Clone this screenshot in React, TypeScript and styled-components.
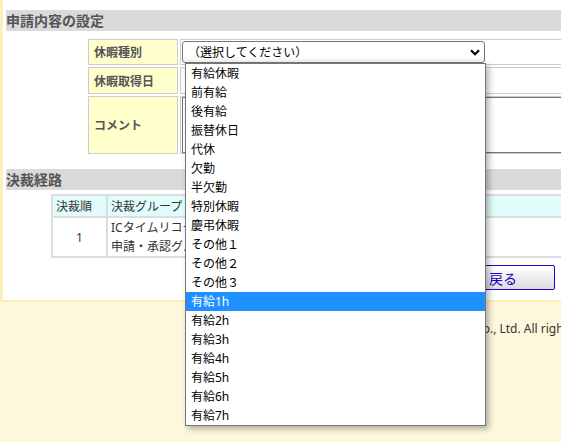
import React from 'react';
import styled, { createGlobalStyle } from 'styled-components';

const GlobalStyle = createGlobalStyle`
  html, body {
    margin: 0;
    padding: 0;
    height: 100%;
  }
  body {
    background: #fdf8dc;
    overflow: hidden;
    font-family: "Noto Sans", "Noto Sans CJK JP", sans-serif;
    color: #333;
  }
`;

const Page = styled.div`
  width: 900px;
  min-height: 100vh;
`;

const Main = styled.div`
  background: #fff;
  border-left: 3px solid #fcefbb;
  border-bottom: 2px solid #fcecb5;
  padding: 10px 0 10px 3px;
`;

const SectionTitle = styled.div<{ $gap?: number }>`
  margin-top: ${(p) => p.$gap ?? 0}px;
  height: 21px;
  line-height: 21px;
  background: #dadada;
  color: #555;
  font-size: 14px;
  font-weight: bold;
`;

const FormTable = styled.table`
  margin: 6px 0 0 80px;
  border-collapse: separate;
  border-spacing: 2px;
`;

const LabelCell = styled.th<{ $h: number }>`
  box-sizing: border-box;
  width: 90px;
  height: ${(p) => p.$h}px;
  padding: 0 0 0 5px;
  background: #ffffcc;
  border: 1px solid #ccc;
  color: #555;
  font-size: 12px;
  font-weight: bold;
  text-align: left;
`;

const ValueCell = styled.td`
  box-sizing: border-box;
  width: 560px;
  padding: 0 1px;
  border: 1px solid #ccc;
  vertical-align: middle;
`;

const SelectWrap = styled.div`
  position: relative;
  width: 303px;
`;

const SelectBox = styled.div`
  box-sizing: border-box;
  height: 22px;
  display: flex;
  align-items: center;
  justify-content: space-between;
  padding: 0 4px 0 5px;
  border: 1px solid #767676;
  border-radius: 3px;
  background: linear-gradient(#ffffff 70%, #f0f0f0);
  color: #000;
  font-size: 12px;
`;

const Dropdown = styled.ul`
  position: absolute;
  top: 100%;
  left: 3px;
  z-index: 10;
  box-sizing: border-box;
  width: 301px;
  margin: 0;
  padding: 0;
  list-style: none;
  background: #fff;
  border: 1px solid #767676;
  box-shadow: 3px 3px 6px rgba(0, 0, 0, 0.3);
`;

const Option = styled.li<{ $active?: boolean }>`
  height: 19px;
  line-height: 19px;
  padding-left: 5px;
  font-size: 12px;
  color: ${(p) => (p.$active ? '#fff' : '#000')};
  background: ${(p) => (p.$active ? '#1e90ff' : '#fff')};
`;

const Comment = styled.textarea`
  display: block;
  box-sizing: border-box;
  width: 100%;
  height: 56px;
  margin: 0;
  border: 1px solid #767676;
  resize: none;
`;

const ApprovalTable = styled.table`
  margin: 4px 0 0 45px;
  background: #dddddd;
  border-collapse: separate;
  border-spacing: 2px;
`;

const HeadCell = styled.th<{ $w: number }>`
  box-sizing: border-box;
  width: ${(p) => p.$w}px;
  height: 20px;
  padding: 0 3px;
  background: #e0fcfb;
  font-size: 12px;
  font-weight: normal;
  text-align: left;
`;

const BodyCell = styled.td<{ $center?: boolean }>`
  height: 35px;
  padding: 0 3px;
  background: #fff;
  font-size: 12px;
  line-height: 19px;
  text-align: ${(p) => (p.$center ? 'center' : 'left')};
`;

const ButtonRow = styled.div`
  display: flex;
  gap: 12px;
  margin-top: 7px;
  padding-left: 445px;
`;

const Button = styled.button`
  width: 104px;
  height: 25px;
  padding: 0;
  border: 1px solid #2b00d4;
  border-radius: 2px;
  background: linear-gradient(#ffffff, #dcdcdc);
  color: #2200cc;
  font-family: "Noto Sans CJK JP", sans-serif;
  font-size: 14px;
`;

const Footer = styled.div`
  padding: 18px 28px 0 0;
  text-align: center;
  font-size: 12px;
  color: #333;
`;

const options = [
  '有給休暇', '前有給', '後有給', '振替休日', '代休', '欠勤', '半欠勤', '特別休暇', '慶弔休暇',
  'その他１', 'その他２', 'その他３', '有給1h', '有給2h', '有給3h', '有給4h', '有給5h', '有給6h', '有給7h',
];

const Chevron = () => (
  <svg width="10" height="7" viewBox="0 0 10 7">
    <path d="M1 1.2 L5 5.2 L9 1.2" fill="none" stroke="#000" strokeWidth="2.2" />
  </svg>
);

const App: React.FC = () => (
  <Page>
    <GlobalStyle />
    <Main>
      <SectionTitle>申請内容の設定</SectionTitle>
      <FormTable>
        <tbody>
          <tr>
            <LabelCell $h={26}>休暇種別</LabelCell>
            <ValueCell>
              <SelectWrap>
                <SelectBox>
                  <span>（選択してください）</span>
                  <Chevron />
                </SelectBox>
                <Dropdown>
                  {options.map((o) => (
                    <Option key={o} $active={o === '有給1h'}>{o}</Option>
                  ))}
                </Dropdown>
              </SelectWrap>
            </ValueCell>
          </tr>
          <tr>
            <LabelCell $h={27}>休暇取得日</LabelCell>
            <ValueCell />
          </tr>
          <tr>
            <LabelCell $h={58}>コメント</LabelCell>
            <ValueCell>
              <Comment />
            </ValueCell>
          </tr>
        </tbody>
      </FormTable>

      <SectionTitle $gap={13}>決裁経路</SectionTitle>
      <ApprovalTable>
        <thead>
          <tr>
            <HeadCell $w={53}>決裁順</HeadCell>
            <HeadCell $w={560}>決裁グループ</HeadCell>
          </tr>
        </thead>
        <tbody>
          <tr>
            <BodyCell $center>1</BodyCell>
            <BodyCell>
              ICタイムリコーダー
              <br />
              申請・承認グループ
            </BodyCell>
          </tr>
        </tbody>
      </ApprovalTable>

      <ButtonRow>
        <Button>戻る</Button>
      </ButtonRow>
    </Main>
    <Footer>Copyright (C) AMANO Business Solutions Co., Ltd. All rights reserved.</Footer>
  </Page>
);

export default App;
